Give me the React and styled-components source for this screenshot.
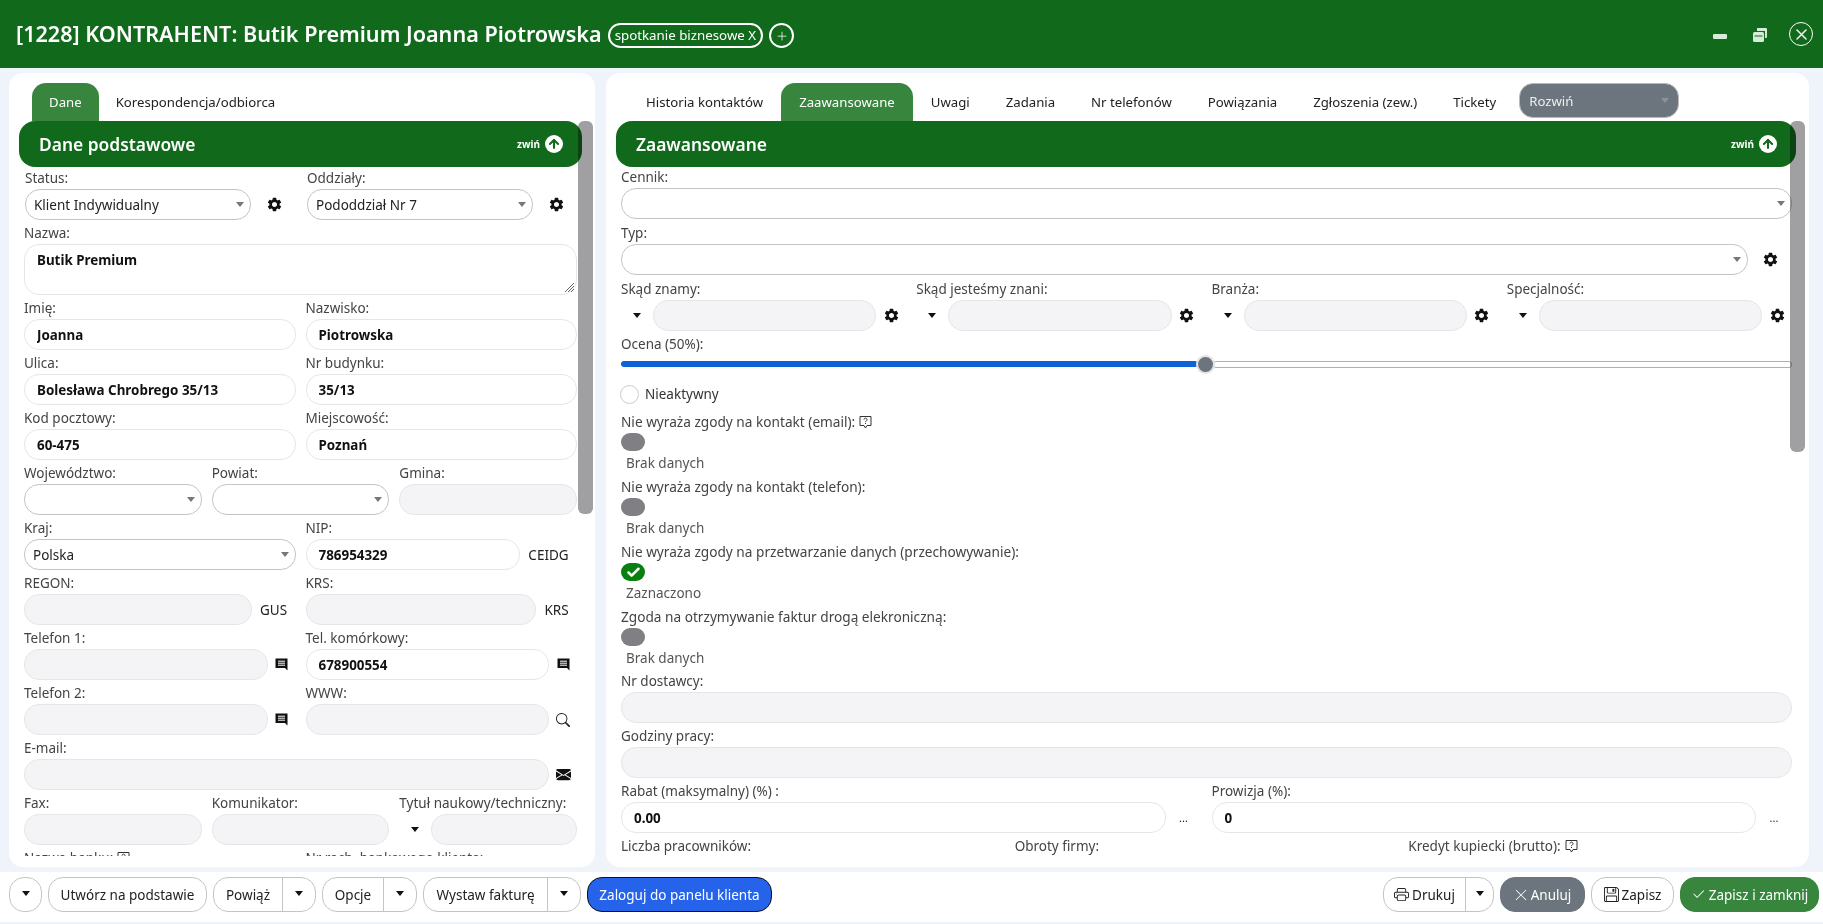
import React from 'react'
import styled, { createGlobalStyle } from 'styled-components'
import { BsSearch, BsEnvelopeFill, BsPrinter, BsFloppy, BsXLg, BsCheck2, BsPlusLg } from 'react-icons/bs'
import { MdSettings } from 'react-icons/md'
import { ArrowUp, Check } from 'lucide-react'

const FONT = '"Noto Sans", "Open Sans", sans-serif'
const GREEN = '#116a1b'
const TEXT_SIZE = '13.5px'

const GlobalStyle = createGlobalStyle`
  html, body { margin: 0; height: 100%; overflow: hidden; }
  body { font-family: ${FONT}; font-size: ${TEXT_SIZE}; background: #eff3fa; color: #444; }
  * { box-sizing: border-box; }
`

const Page = styled.div`
  height: 924px;
  display: flex;
  flex-direction: column;
`
const TopBar = styled.header`
  height: 68px;
  flex: none;
  background: ${GREEN};
  color: #fff;
  display: flex;
  align-items: center;
  padding: 0 10px 0 16px;
`
const Title = styled.h1`
  margin: 0 6px 2px 0;
  font-size: 21.6px;
  font-weight: 600;
  white-space: nowrap;
`
const Chip = styled.span`
  height: 25px;
  padding: 0 5px;
  border: 2px solid #fff;
  border-radius: 13px;
  font-size: 13.3px;
  line-height: 21px;
  margin-top: 3px;
  white-space: nowrap;
`
const RoundPlus = styled.span`
  width: 25px;
  height: 25px;
  margin: 3px 0 0 6px;
  border: 2px solid #fff;
  border-radius: 50%;
  display: flex;
  align-items: center;
  justify-content: center;
  font-size: 12px;
`
const WindowButtons = styled.div`
  margin-left: auto;
  display: flex;
  align-items: center;
  color: #d6ecd6;
`
const MinimizeBar = styled.span`
  width: 14px;
  height: 5px;
  margin: 4px 26px 0 0;
  background: #d6ecd6;
  border-radius: 1px;
`
const RestoreIcon = styled.svg`
  margin: 1px 22px 0 0;
`
const CloseCircle = styled.span`
  width: 24px;
  height: 24px;
  border: 1.5px solid #fff;
  border-radius: 50%;
  display: flex;
  align-items: center;
  justify-content: center;
  color: #fff;
  font-size: 13px;
`
const Main = styled.main`
  flex: none;
  height: 794px;
  margin-top: 5px;
  padding: 0 14px 0 9px;
  display: flex;
  gap: 11px;
`
const Panel = styled.section`
  width: ${p => p.$w}px;
  flex: none;
  background: #fff;
  border-radius: 14px;
  padding: 10px 13px 10px 10px;
  display: flex;
  flex-direction: column;
`
const Tabs = styled.nav`
  height: 38px;
  flex: none;
  display: flex;
  align-items: stretch;
  padding-left: ${p => p.$left || 13}px;
`
const Tab = styled.a`
  padding: 0 ${p => p.$pad || 17}px;
  display: flex;
  align-items: center;
  font-size: 13.2px;
  color: ${p => (p.$active ? '#fff' : '#222')};
  background: ${p => (p.$active ? '#38853e' : 'transparent')};
  border-radius: 14px 14px 0 0;
  white-space: nowrap;
`
const Expand = styled.div`
  width: 160px;
  height: 35px;
  margin-left: 5px;
  padding: 0 9px;
  background: #6c757d;
  border: 1px solid #bbb;
  border-radius: 14px;
  color: #eee;
  font-size: 13.2px;
  display: flex;
  align-items: center;
  justify-content: space-between;
`
const Body = styled.div`
  flex: 1;
  position: relative;
  min-height: 0;
`
const Scroller = styled.div`
  height: 735px;
  overflow: hidden;
`
const Thumb = styled.div`
  position: absolute;
  top: 0;
  right: ${p => p.$right}px;
  width: 15px;
  height: ${p => p.$h}px;
  background: #a0a0a3;
  border-radius: 6px;
  mix-blend-mode: multiply;
`
const SectionBar = styled.div`
  height: 46px;
  background: ${GREEN};
  border-radius: 16px;
  color: #fff;
  display: flex;
  align-items: center;
  justify-content: space-between;
  padding: 0 19px 0 20px;
`
const SectionTitle = styled.h2`
  margin: 0;
  font-size: 17.4px;
  font-weight: 600;
`
const Collapse = styled.span`
  display: flex;
  align-items: center;
  gap: 5px;
  font-size: 10px;
  font-weight: 700;
`
const ArrowCircle = styled.span`
  width: 18px;
  height: 18px;
  background: #fff;
  border-radius: 50%;
  color: ${GREEN};
  display: flex;
  align-items: center;
  justify-content: center;
`
const Form = styled.div`
  padding: 0 ${p => p.$right}px 0 ${p => p.$left}px;
  margin-top: ${p => p.$top}px;
`
const Grid = styled.div`
  display: grid;
  grid-template-columns: ${p => p.$cols};
  column-gap: ${p => p.$gap || 10}px;
`
const StatusGrid = styled(Grid)`
  padding-left: 1px;
`
const Cell = styled.div`
  min-width: 0;
`
const Label = styled.div`
  height: ${p => p.$h || 24}px;
  padding-top: 2px;
  line-height: 20px;
  font-size: ${TEXT_SIZE};
  color: #444;
  white-space: nowrap;
  display: flex;
  align-items: center;
  gap: 4px;
`
const Line = styled.div`
  display: flex;
  align-items: center;
`
const Input = styled.input`
  display: block;
  width: 100%;
  min-width: 0;
  height: 31px;
  padding: 0 12px;
  border: 1px solid #e6e6e8;
  border-radius: 15px;
  background: ${p => (p.disabled ? '#f4f4f6' : '#fff')};
  font: 700 13.4px ${FONT};
  color: #111;
  outline: none;
`
const Textarea = styled.div`
  position: relative;
  height: 51px;
  padding: 6px 12px;
  border: 1px solid #e6e6e8;
  border-radius: 15px;
  font-weight: 700;
  font-size: 13.4px;
  color: #111;
`
const Grip = styled.svg`
  position: absolute;
  right: 1px;
  bottom: 1px;
`
const SelectBox = styled.div`
  flex: 1;
  min-width: 0;
  height: 31px;
  padding: 0 6px 0 8px;
  border: 1px solid #c4c4c8;
  border-radius: 15px;
  background: #fff;
  display: flex;
  align-items: center;
  justify-content: space-between;
  font-size: ${TEXT_SIZE};
  color: #222;
`
const Caret = styled.i`
  flex: none;
  width: 0;
  height: 0;
  border-left: 4px solid transparent;
  border-right: 4px solid transparent;
  border-top: 5px solid ${p => p.$c || '#777'};
`
const Addon = styled.span`
  flex: none;
  width: ${p => p.$w}px;
  padding-left: ${p => p.$inset || 0}px;
  display: flex;
  align-items: center;
  justify-content: center;
  font-size: ${p => p.$size || 13.5}px;
  color: ${p => p.$c || '#222'};
`
const Slider = styled.div`
  height: 20px;
  display: flex;
  align-items: center;
`
const Track = styled.div`
  height: ${p => (p.$fill ? 6 : 7)}px;
  flex: 1;
  background: ${p => (p.$fill ? '#0d62d8' : '#fff')};
  border: ${p => (p.$fill ? 'none' : '1.5px solid #b0b0b0')};
  border-radius: 3px;
`
const Knob = styled.span`
  position: relative;
  z-index: 1;
  flex: none;
  width: 19px;
  height: 19px;
  margin: 0 -2px;
  background: #6c757d;
  border: 2px solid #e4e4e6;
  border-radius: 50%;
`
const CheckRow = styled.div`
  height: 18px;
  margin-top: 11px;
  margin-bottom: 9px;
  display: flex;
  align-items: center;
  gap: 6px;
  font-size: ${TEXT_SIZE};
  color: #333;
`
const Radio = styled.span`
  width: 19px;
  height: 19px;
  margin-left: -1px;
  border: 1.5px solid #ccc;
  border-radius: 50%;
`
const ConsentGroup = styled.div`
  margin-bottom: -4px;
`
const Consent = styled.div`
  height: 65px;
`
const ConsentLabel = styled.div`
  height: 20px;
  line-height: 20px;
  font-size: 13.65px;
  color: #444;
  display: flex;
  align-items: center;
  gap: 4px;
`
const Toggle = styled.span`
  display: flex;
  align-items: center;
  justify-content: center;
  width: 24px;
  height: 18px;
  margin-top: 1px;
  border-radius: 9px;
  background: ${p => (p.$on ? '#07800f' : '#808084')};
  color: #fff;
`
const ConsentStatus = styled.div`
  height: 20px;
  margin-top: 2px;
  padding-left: 5px;
  line-height: 20px;
  font-size: ${TEXT_SIZE};
  color: #555;
`
const Footer = styled.footer`
  flex: none;
  height: 50px;
  margin-top: 5px;
  padding: 5px 4px 0 9px;
  background: #fff;
  display: flex;
  gap: 6px;
`
const Button = styled.button`
  height: 35px;
  width: ${p => p.$w}px;
  flex: none;
  padding: 0;
  background: ${p => p.$bg || '#fff'};
  border: 1px solid ${p => p.$border || '#c4c4c8'};
  border-radius: 15px;
  color: ${p => p.$c || '#222'};
  font: 400 ${TEXT_SIZE} ${FONT};
  display: flex;
  align-items: center;
  justify-content: center;
  gap: 3px;
`
const SplitButton = styled.div`
  height: 35px;
  width: ${p => p.$w}px;
  flex: none;
  border: 1px solid #c4c4c8;
  border-radius: 15px;
  display: flex;
  font-size: ${TEXT_SIZE};
  color: #222;
`
const SplitMain = styled.span`
  flex: 1;
  padding-bottom: ${p => (p.$up ? 3 : 0)}px;
  display: flex;
  align-items: center;
  justify-content: center;
  gap: 3px;
`
const SplitArrow = styled.span`
  width: ${p => p.$w}px;
  padding-bottom: 3px;
  border-left: 1px solid #c4c4c8;
  display: flex;
  align-items: center;
  justify-content: center;
`
const Spacer = styled.div`
  flex: 1;
`

const Gear = () => <MdSettings size={17} color="#111" />

function CommentIcon() {
  return (
    <svg width="13" height="13" viewBox="0 0 13 13">
      <path d="M.5.5h12v12l-2.5-2.5H.5z" fill="#111" />
      <path d="M3 3.200h7M3 5.200h7M3 7.200h7" stroke="#fff" strokeWidth="1" />
    </svg>
  )
}

function HintIcon() {
  return (
    <svg width="13" height="13" viewBox="0 0 13 13" fill="none" stroke="#333">
      <path d="M1 .5h11v9H8l-1.500 2.500L5 9.500H1z" />
      <path d="M5 3.600a1.500 1.500 0 1 1 2.300 1.300c-.6.400-.8.600-.8 1.200M6.500 7v1" />
    </svg>
  )
}

function Field({ label, icon, labelHeight, children }) {
  return (
    <Cell>
      <Label $h={labelHeight}>{label}{icon}</Label>
      {children}
    </Cell>
  )
}

function Select({ value }) {
  return <SelectBox><span>{value}</span><Caret /></SelectBox>
}

function ConsentBlock({ label, on, icon }) {
  return (
    <Consent>
      <ConsentLabel>{label}{icon}</ConsentLabel>
      <Toggle $on={on}>{on && <Check size={15} strokeWidth={4} />}</Toggle>
      <ConsentStatus>{on ? 'Zaznaczono' : 'Brak danych'}</ConsentStatus>
    </Consent>
  )
}

function SectionHeader({ title }) {
  return (
    <SectionBar>
      <SectionTitle>{title}</SectionTitle>
      <Collapse>zwiń <ArrowCircle><ArrowUp size={14} strokeWidth={3.5} /></ArrowCircle></Collapse>
    </SectionBar>
  )
}

const TWO = '1fr 1fr'
const THREE = '1fr 1fr 1fr'

function LeftForm() {
  return (
    <Form $left={5} $right={5} $top={-2}>
      <StatusGrid $cols={TWO} $gap={12}>
        <Field label="Status:"><Line><Select value="Klient Indywidualny" /><Addon $w={44} $inset={2}><Gear /></Addon></Line></Field>
        <Field label="Oddziały:"><Line><Select value="Pododdział Nr 7" /><Addon $w={44} $inset={2}><Gear /></Addon></Line></Field>
      </StatusGrid>
      <Field label="Nazwa:"><Textarea>Butik Premium<Grip width="11" height="11" viewBox="0 0 11 11"><path d="M1 10 10 1M4 10l6-6M7 10l3-3" stroke="#666" fill="none" /></Grip></Textarea></Field>
      <Grid $cols={TWO}>
        <Field label="Imię:"><Input readOnly defaultValue="Joanna" /></Field>
        <Field label="Nazwisko:"><Input readOnly defaultValue="Piotrowska" /></Field>
        <Field label="Ulica:"><Input readOnly defaultValue="Bolesława Chrobrego 35/13" /></Field>
        <Field label="Nr budynku:"><Input readOnly defaultValue="35/13" /></Field>
        <Field label="Kod pocztowy:"><Input readOnly defaultValue="60-475" /></Field>
        <Field label="Miejscowość:"><Input readOnly defaultValue="Poznań" /></Field>
      </Grid>
      <Grid $cols={THREE}>
        <Field label="Województwo:"><Line><Select /></Line></Field>
        <Field label="Powiat:"><Line><Select /></Line></Field>
        <Field label="Gmina:"><Input disabled /></Field>
      </Grid>
      <Grid $cols={TWO}>
        <Field label="Kraj:"><Line><Select value="Polska" /></Line></Field>
        <Field label="NIP:"><Line><Input readOnly defaultValue="786954329" /><Addon $w={57}>CEIDG</Addon></Line></Field>
        <Field label="REGON:"><Line><Input disabled /><Addon $w={44}>GUS</Addon></Line></Field>
        <Field label="KRS:"><Line><Input disabled /><Addon $w={41}>KRS</Addon></Line></Field>
        <Field label="Telefon 1:"><Line><Input disabled /><Addon $w={28}><CommentIcon /></Addon></Line></Field>
        <Field label="Tel. komórkowy:"><Line><Input readOnly defaultValue="678900554" /><Addon $w={28}><CommentIcon /></Addon></Line></Field>
        <Field label="Telefon 2:"><Line><Input disabled /><Addon $w={28}><CommentIcon /></Addon></Line></Field>
        <Field label="WWW:"><Line><Input disabled /><Addon $w={28}><BsSearch size={14} /></Addon></Line></Field>
      </Grid>
      <Field label="E-mail:"><Line><Input disabled /><Addon $w={28}><BsEnvelopeFill size={15} color="#111" /></Addon></Line></Field>
      <Grid $cols={THREE}>
        <Field label="Fax:"><Input disabled /></Field>
        <Field label="Komunikator:"><Input disabled /></Field>
        <Field label="Tytuł naukowy/techniczny:"><Line><Addon $w={32}><Caret $c="#111" /></Addon><Input disabled /></Line></Field>
      </Grid>
      <Grid $cols={TWO}>
        <Field label="Nazwa banku:" icon={<HintIcon />} />
        <Field label="Nr rach. bankowego klienta:" />
      </Grid>
    </Form>
  )
}

function PickField({ label }) {
  return (
    <Field label={label} labelHeight={25}>
      <Line>
        <Addon $w={32}><Caret $c="#111" /></Addon>
        <Input disabled />
        <Addon $w={30}><Gear /></Addon>
      </Line>
    </Field>
  )
}

function RightForm() {
  return (
    <Form $left={5} $right={4} $top={-3}>
      <Field label="Cennik:"><Line><Select /></Line></Field>
      <Field label="Typ:" labelHeight={25}><Line><Select /><Addon $w={44}><Gear /></Addon></Line></Field>
      <Grid $cols="1fr 1fr 1fr 1fr">
        <PickField label="Skąd znamy:" />
        <PickField label="Skąd jesteśmy znani:" />
        <PickField label="Branża:" />
        <PickField label="Specjalność:" />
      </Grid>
      <Label $h={23}>Ocena (50%):</Label>
      <Slider><Track $fill /><Knob /><Track /></Slider>
      <CheckRow><Radio />Nieaktywny</CheckRow>
      <ConsentGroup>
        <ConsentBlock label="Nie wyraża zgody na kontakt (email):" icon={<HintIcon />} />
        <ConsentBlock label="Nie wyraża zgody na kontakt (telefon):" />
        <ConsentBlock on label="Nie wyraża zgody na przetwarzanie danych (przechowywanie):" />
        <ConsentBlock label="Zgoda na otrzymywanie faktur drogą elekroniczną:" />
      </ConsentGroup>
      <Field label="Nr dostawcy:"><Input disabled /></Field>
      <Field label="Godziny pracy:"><Input disabled /></Field>
      <Grid $cols={TWO}>
        <Field label="Rabat (maksymalny) (%) :"><Line><Input readOnly defaultValue="0.00" /><Addon $w={36} $size={11}>...</Addon></Line></Field>
        <Field label="Prowizja (%):"><Line><Input readOnly defaultValue="0" /><Addon $w={36} $size={11}>...</Addon></Line></Field>
      </Grid>
      <Grid $cols={THREE}>
        <Field label="Liczba pracowników:" />
        <Field label="Obroty firmy:" />
        <Field label="Kredyt kupiecki (brutto):" icon={<HintIcon />} />
      </Grid>
    </Form>
  )
}

export default function App() {
  return (
    <Page>
      <GlobalStyle />
      <TopBar>
        <Title>[1228] KONTRAHENT: Butik Premium Joanna Piotrowska</Title>
        <Chip>spotkanie biznesowe X</Chip>
        <RoundPlus><BsPlusLg /></RoundPlus>
        <WindowButtons>
          <MinimizeBar />
          <RestoreIcon width="14" height="15" viewBox="0 0 14 15">
            <path d="M4 1h9a1 1 0 0 1 1 1v8a1 1 0 0 1-1 1h-1V4H4z" fill="#d6ecd6" />
            <rect y="5" width="11" height="10" rx="1.500" fill="#d6ecd6" />
            <rect x="1.500" y="8.500" width="8" height="1" fill="#116a1b" />
          </RestoreIcon>
          <CloseCircle><BsXLg strokeWidth={1} /></CloseCircle>
        </WindowButtons>
      </TopBar>
      <Main>
        <Panel $w={586}>
          <Tabs>
            <Tab $active>Dane</Tab>
            <Tab>Korespondencja/odbiorca</Tab>
          </Tabs>
          <Body>
            <Scroller>
              <SectionHeader title="Dane podstawowe" />
              <LeftForm />
            </Scroller>
            <Thumb $right={-11} $h={393} />
          </Body>
        </Panel>
        <Panel $w={1203}>
          <Tabs $left={12}>
            <Tab $pad={18}>Historia kontaktów</Tab>
            <Tab $pad={18} $active>Zaawansowane</Tab>
            <Tab $pad={18}>Uwagi</Tab>
            <Tab $pad={18}>Zadania</Tab>
            <Tab $pad={18}>Nr telefonów</Tab>
            <Tab $pad={18}>Powiązania</Tab>
            <Tab $pad={18}>Zgłoszenia (zew.)</Tab>
            <Tab $pad={18}>Tickety</Tab>
            <Expand>Rozwiń<Caret $c="#8b929a" /></Expand>
          </Tabs>
          <Body>
            <Scroller>
              <SectionHeader title="Zaawansowane" />
              <RightForm />
            </Scroller>
            <Thumb $right={-9} $h={331} />
          </Body>
        </Panel>
      </Main>
      <Footer>
        <SplitButton $w={33}><SplitMain $up><Caret $c="#111" /></SplitMain></SplitButton>
        <Button $w={159}>Utwórz na podstawie</Button>
        <SplitButton $w={103}><SplitMain>Powiąż</SplitMain><SplitArrow $w={33}><Caret $c="#111" /></SplitArrow></SplitButton>
        <SplitButton $w={95}><SplitMain>Opcje</SplitMain><SplitArrow $w={33}><Caret $c="#111" /></SplitArrow></SplitButton>
        <SplitButton $w={158}><SplitMain>Wystaw fakturę</SplitMain><SplitArrow $w={33}><Caret $c="#111" /></SplitArrow></SplitButton>
        <Button $w={185} $bg="#2563eb" $c="#fff" $border="#111">Zaloguj do panelu klienta</Button>
        <Spacer />
        <SplitButton $w={111}><SplitMain><BsPrinter size={15} />Drukuj</SplitMain><SplitArrow $w={28}><Caret $c="#111" /></SplitArrow></SplitButton>
        <Button $w={85} $bg="#6c757d" $c="#fff" $border="#6c757d"><BsXLg size={14} />Anuluj</Button>
        <Button $w={83}><BsFloppy size={15} />Zapisz</Button>
        <Button $w={139} $bg="#38853e" $c="#fff" $border="#38853e"><BsCheck2 size={15} />Zapisz i zamknij</Button>
      </Footer>
    </Page>
  )
}
